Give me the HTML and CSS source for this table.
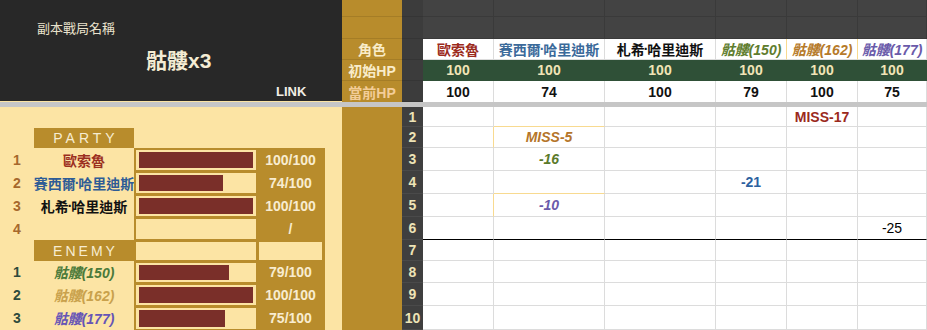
FILE: index.html
```html
<!DOCTYPE html>
<html lang="zh-Hant">
<head>
<meta charset="utf-8">
<title>副本戰局</title>
<link rel="stylesheet" href="styles.css">
</head>
<body>
<div class="sheet">
  <div class="top">
    <div class="title-panel">
      <div class="t-label">副本戰局名稱</div>
      <div class="t-name">骷髏x3</div>
      <div class="t-link">LINK</div>
    </div>
    <div class="labels">
      <div></div><div></div><div>角色</div><div>初始HP</div><div class="lab-cur">當前HP</div>
    </div>
    <div class="rh-top"><div></div><div></div><div></div><div></div><div></div></div>
    <div class="head">
      <div class="h dark"></div><div class="h dark"></div><div class="h dark"></div><div class="h dark"></div><div class="h dark"></div><div class="h dark"></div>
      <div class="h dark"></div><div class="h dark"></div><div class="h dark"></div><div class="h dark"></div><div class="h dark"></div><div class="h dark"></div>
      <div class="h name c-red">歐索魯</div>
      <div class="h name c-blue">賽西爾<span class="dot">·</span>哈里迪斯</div>
      <div class="h name c-black">札希<span class="dot">·</span>哈里迪斯</div>
      <div class="h name yr c-olive it">骷髏(150)</div>
      <div class="h name yr c-orange it">骷髏(162)</div>
      <div class="h name c-purple it">骷髏(177)</div>
      <div class="h init">100</div><div class="h init">100</div><div class="h init">100</div><div class="h init">100</div><div class="h init">100</div><div class="h init">100</div>
      <div class="h cur">100</div><div class="h cur">74</div><div class="h cur">100</div><div class="h cur">79</div><div class="h cur">100</div><div class="h cur">75</div>
    </div>
  </div>
  <div class="sep"></div>
  <div class="bottom">
    <div class="roster">
      <div class="full"></div>

      <div></div><div class="sec party">PARTY</div><div class="span3"></div>

      <div class="num n-party">1</div><div class="rname l-red">歐索魯</div>
      <div class="bar"><div class="box"><div class="fill" style="width:100%"></div></div></div>
      <div class="hp">100/100</div><div></div>

      <div class="num n-party">2</div><div class="rname l-blue">賽西爾<span class="dot">·</span>哈里迪斯</div>
      <div class="bar"><div class="box"><div class="fill" style="width:74%"></div></div></div>
      <div class="hp">74/100</div><div></div>

      <div class="num n-party">3</div><div class="rname l-black">札希<span class="dot">·</span>哈里迪斯</div>
      <div class="bar"><div class="box"><div class="fill" style="width:100%"></div></div></div>
      <div class="hp">100/100</div><div></div>

      <div class="num n-party">4</div><div class="rname"></div>
      <div class="bar"><div class="box"></div></div>
      <div class="hp">/</div><div></div>

      <div></div><div class="sec enemy">ENEMY</div>
      <div class="bar"><div class="box"></div></div>
      <div class="hp boxed"><div class="box"></div></div><div></div>

      <div class="num n-enemy">1</div><div class="rname l-green it">骷髏(150)</div>
      <div class="bar"><div class="box"><div class="fill" style="width:79%"></div></div></div>
      <div class="hp">79/100</div><div></div>

      <div class="num n-enemy">2</div><div class="rname l-gold it">骷髏(162)</div>
      <div class="bar"><div class="box"><div class="fill" style="width:100%"></div></div></div>
      <div class="hp">100/100</div><div></div>

      <div class="num n-enemy">3</div><div class="rname l-purple it">骷髏(177)</div>
      <div class="bar"><div class="box"><div class="fill" style="width:75%"></div></div></div>
      <div class="hp">75/100</div><div></div>
    </div>
    <div class="gold"></div>
    <div class="rn">
      <div>1</div><div>2</div><div>3</div><div>4</div><div>5</div><div>6</div><div>7</div><div>8</div><div>9</div><div>10</div>
    </div>
    <div class="log">
      <div class="c"></div><div class="c yb"></div><div class="c"></div><div class="c"></div><div class="c d-red">MISS-17</div><div class="c"></div>
      <div class="c yr"></div><div class="c d-orange it">MISS-5</div><div class="c"></div><div class="c"></div><div class="c"></div><div class="c"></div>
      <div class="c"></div><div class="c d-olive it">-16</div><div class="c"></div><div class="c"></div><div class="c"></div><div class="c"></div>
      <div class="c"></div><div class="c yb"></div><div class="c"></div><div class="c d-blue">-21</div><div class="c"></div><div class="c"></div>
      <div class="c yr"></div><div class="c d-purple it">-10</div><div class="c"></div><div class="c"></div><div class="c"></div><div class="c"></div>
      <div class="c bk"></div><div class="c bk"></div><div class="c bk"></div><div class="c bk"></div><div class="c bk"></div><div class="c bk d-plain">-25</div>
      <div class="c"></div><div class="c"></div><div class="c"></div><div class="c"></div><div class="c"></div><div class="c"></div>
      <div class="c"></div><div class="c"></div><div class="c"></div><div class="c"></div><div class="c"></div><div class="c"></div>
      <div class="c"></div><div class="c"></div><div class="c"></div><div class="c"></div><div class="c"></div><div class="c"></div>
      <div class="c"></div><div class="c"></div><div class="c"></div><div class="c"></div><div class="c"></div><div class="c"></div>
    </div>
  </div>
</div>
</body>
</html>
```

FILE: styles.css
```css
html, body {
  margin: 0;
  padding: 0;
}
body {
  width: 927px;
  height: 330px;
  overflow: hidden;
  background: #ffffff;
  font-family: "Liberation Sans", "Noto Sans CJK TC", sans-serif;
}
.sheet {
  --gold: #b88c2c;
  --cream: #fce4a4;
  --grid: #dcdcdc;
  --yline: #f8da90;
  --toprows: 17px 22px 21px 21px 21px;
  --rows: 20px 21px 23px 23px 23px 23px 21px 22px 23px 24px;
  width: 927px;
}
.top {
  display: flex;
  height: 102px;
}
.title-panel {
  width: 342px;
  box-sizing: border-box;
  background: #282828;
  border-bottom: 1px solid var(--cream);
  padding-top: 20px;
}
.t-label {
  margin-left: 37px;
  font-size: 13px;
  line-height: 18px;
  color: #e8e1cc;
}
.t-name {
  margin: 9px 0 0 146px;
  font-size: 21px;
  line-height: 28px;
  font-weight: bold;
  color: #f4ecd4;
}
.t-link {
  margin: 9px 0 0 276px;
  font-size: 13px;
  line-height: 16px;
  font-weight: bold;
  color: #f1ede4;
}
.labels {
  width: 60px;
  display: grid;
  grid-template-rows: var(--toprows);
  background: var(--gold);
}
.labels > div {
  box-sizing: border-box;
  border-bottom: 1px solid #a57d26;
  display: flex;
  align-items: center;
  justify-content: center;
  font-size: 14px;
  font-weight: bold;
  color: #f9ecca;
}
.labels > .lab-cur {
  color: #f3cd98;
  border-bottom: none;
}
.rh-top {
  width: 21px;
  display: grid;
  grid-template-rows: var(--toprows);
  background: #3c3c3c;
}
.rh-top > div {
  border-bottom: 1px solid #353535;
}
.head {
  width: 504px;
  display: grid;
  grid-template-columns: 71px 111px 111px 71px 71px 69px;
  grid-template-rows: var(--toprows);
}
.h {
  box-sizing: border-box;
  border-right: 1px solid var(--grid);
  border-bottom: 1px solid var(--grid);
  display: flex;
  align-items: center;
  justify-content: center;
  font-size: 14px;
  font-weight: bold;
  white-space: nowrap;
}
.h.dark {
  background: #434343;
  border-color: #3a3a3a;
}
.h.name {
  background: #ffffff;
}
.h.init {
  background: #2f5037;
  border-color: #2f5037;
  color: #f1e4b6;
}
.h.cur {
  background: #ffffff;
  color: #111111;
  border-bottom: none;
}
.dot {
  margin: 0 -1px;
}
.it {
  font-style: italic;
}
.c-red { color: #9b2a1c; }
.c-blue { color: #3b6a9a; }
.c-black { color: #111111; }
.c-olive { color: #5f7d2e; }
.c-orange { color: #b67a2a; }
.c-purple { color: #6a5aaa; }

.sep {
  height: 5px;
  background: #c6c6c6;
}
.bottom {
  display: flex;
  height: 223px;
}
.roster {
  width: 342px;
  background: var(--cream);
  display: grid;
  grid-template-columns: 34px 100px 122px 69px 17px;
  grid-template-rows: var(--rows);
}
.roster .full {
  grid-column: 1 / -1;
}
.roster .span3 {
  grid-column: span 3;
}
.sec {
  margin-top: 1px;
  background: var(--gold);
  color: #f7ecd2;
  font-size: 14px;
  display: flex;
  align-items: center;
  justify-content: center;
}
.sec.party {
  letter-spacing: 4px;
  padding-left: 4px;
}
.sec.enemy {
  letter-spacing: 3px;
  padding-left: 3px;
  margin-top: 0;
}
.num {
  display: flex;
  align-items: center;
  justify-content: center;
  font-size: 14px;
  font-weight: bold;
}
.n-party { color: #a6682c; }
.n-enemy { color: #2e4a3c; }
.rname {
  display: flex;
  align-items: center;
  justify-content: center;
  font-size: 14px;
  font-weight: bold;
  white-space: nowrap;
}
.l-red { color: #9b2f1f; }
.l-blue { color: #2e5c96; }
.l-black { color: #111111; }
.l-green { color: #4b7a3a; }
.l-gold { color: #c9a14c; }
.l-purple { color: #6654b6; }
.bar {
  background: var(--gold);
  padding: 2px 0 1px 2px;
  box-sizing: border-box;
}
.box {
  height: 100%;
  box-sizing: border-box;
  background: var(--cream);
  padding: 2px 3px;
}
.fill {
  height: 100%;
  background: #7a2f29;
}
.hp {
  background: var(--gold);
  display: flex;
  align-items: center;
  justify-content: center;
  font-size: 14px;
  font-weight: bold;
  color: #f8ecd0;
}
.hp.boxed {
  display: block;
  padding: 2px 3px 1px 3px;
  box-sizing: border-box;
}
.gold {
  width: 60px;
  background: var(--gold);
}
.rn {
  width: 21px;
  display: grid;
  grid-template-rows: var(--rows);
  background: #3f3f3f;
}
.rn > div {
  box-sizing: border-box;
  border-bottom: 1px solid #4a4a4a;
  display: flex;
  align-items: center;
  justify-content: center;
  font-size: 14px;
  font-weight: bold;
  color: #ede3b6;
}
.log {
  width: 504px;
  display: grid;
  grid-template-columns: 71px 111px 111px 71px 71px 69px;
  grid-template-rows: var(--rows);
}
.c {
  box-sizing: border-box;
  border-right: 1px solid var(--grid);
  border-bottom: 1px solid var(--grid);
  display: flex;
  align-items: center;
  justify-content: center;
  font-size: 14px;
  font-weight: bold;
  white-space: nowrap;
}
.yb { border-bottom-color: var(--yline); }
.yr { border-right-color: var(--yline); }
.c.bk { border-bottom-color: #000000; }
.d-red { color: #9b2a1c; }
.d-orange { color: #b5752a; }
.d-olive { color: #5a7a2a; }
.d-blue { color: #2e62a0; }
.d-purple { color: #6a5aaa; }
.d-plain { color: #000000; font-weight: normal; }
```
